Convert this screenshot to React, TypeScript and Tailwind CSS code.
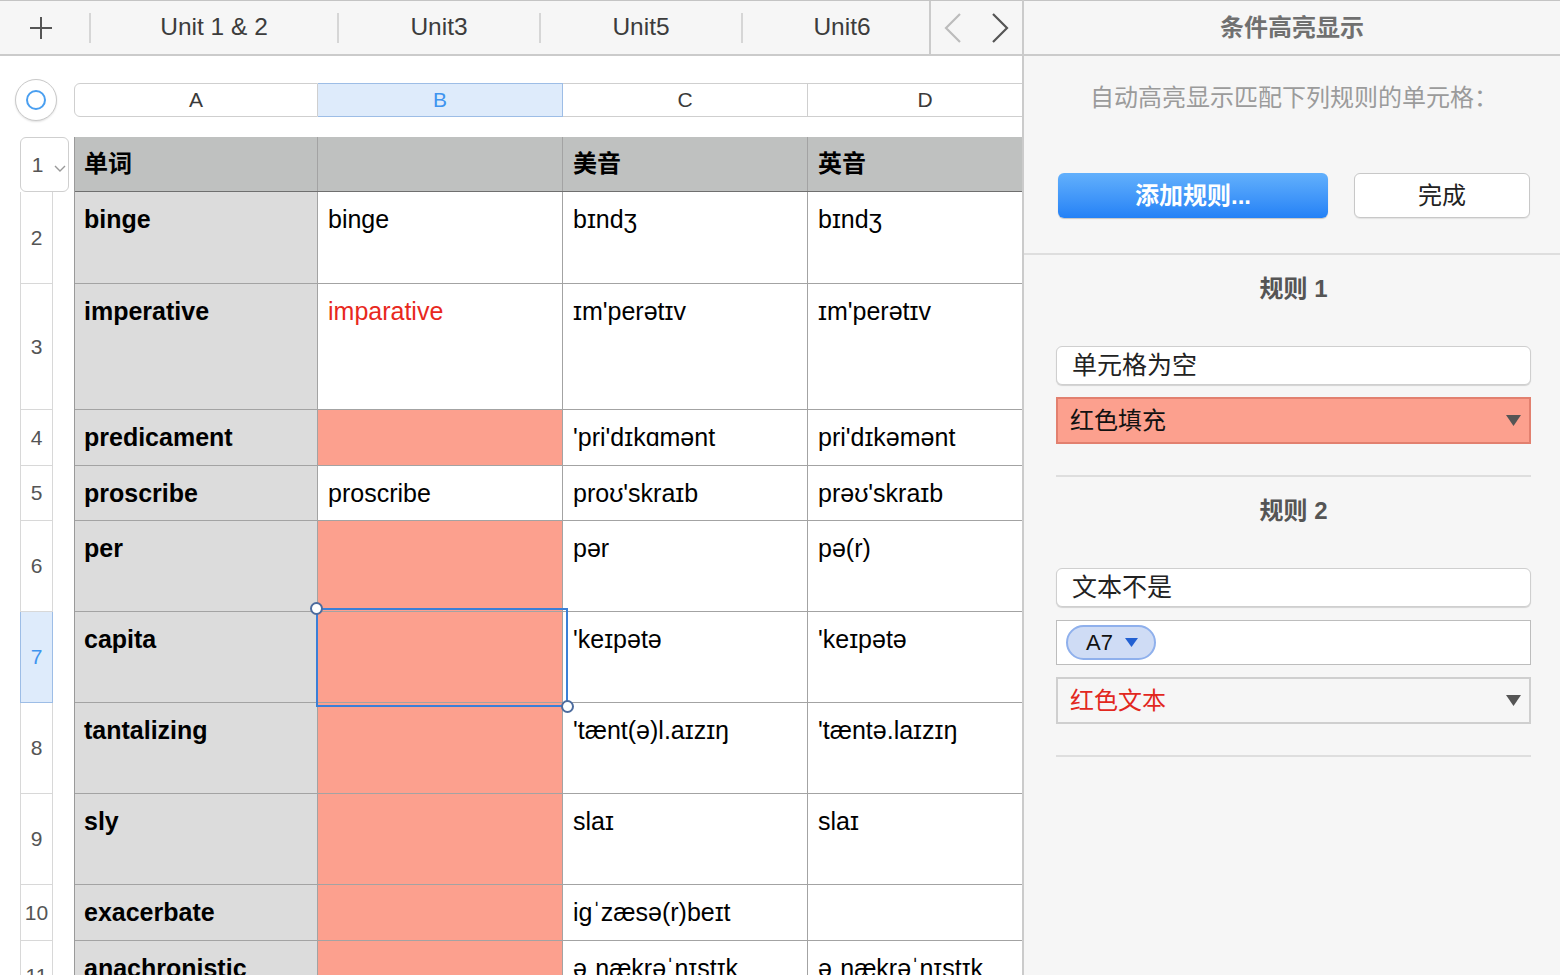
import React from 'react';

type Row = {
  h: string;
  a: string;
  b?: string;
  bRedText?: boolean;
  fill?: boolean;
  c: string;
  d: string;
  num: string;
  sel?: boolean;
};

const rows: Row[] = [
  { h: 'h-[92px]', num: '2', a: 'binge', b: 'binge', c: 'bɪndʒ', d: 'bɪndʒ' },
  { h: 'h-[126px]', num: '3', a: 'imperative', b: 'imparative', bRedText: true, c: "ɪm'perətɪv", d: "ɪm'perətɪv" },
  { h: 'h-[56px]', num: '4', a: 'predicament', fill: true, c: "'pri'dɪkɑmənt", d: "pri'dɪkəmənt" },
  { h: 'h-[55px]', num: '5', a: 'proscribe', b: 'proscribe', c: "proʊ'skraɪb", d: "prəʊ'skraɪb" },
  { h: 'h-[91px]', num: '6', a: 'per', fill: true, c: 'pər', d: 'pə(r)' },
  { h: 'h-[91px]', num: '7', a: 'capita', fill: true, c: "'keɪpətə", d: "'keɪpətə", sel: true },
  { h: 'h-[91px]', num: '8', a: 'tantalizing', fill: true, c: "'tænt(ə)l.aɪzɪŋ", d: "'tæntə.laɪzɪŋ" },
  { h: 'h-[91px]', num: '9', a: 'sly', fill: true, c: 'slaɪ', d: 'slaɪ' },
  { h: 'h-[56px]', num: '10', a: 'exacerbate', fill: true, c: 'igˈzæsə(r)beɪt', d: '' },
  { h: 'h-[70px]', num: '11', a: 'anachronistic', fill: true, c: 'əˌnækrəˈnɪstɪk', d: 'əˌnækrəˈnɪstɪk' },
];

const Triangle = ({ className }: { className: string }) => (
  <svg width="15" height="11" viewBox="0 0 15 11" className={className}>
    <path d="M0 0 L15 0 L7.5 11 Z" fill="currentColor" />
  </svg>
);

function TabBar() {
  const sep = <div className="w-[2px] h-[30px] bg-[#d6d6d6]" />;
  return (
    <div className="flex h-[56px] items-center border-t border-t-[#c4c4c4] border-b-2 border-b-[#cbcbcb] bg-[#f6f6f6] text-[24.5px] text-[#3c3c3c]">
      <div className="w-[89px] pl-[29px]">
        <svg width="24" height="24" viewBox="0 0 24 24" className="text-[#555]">
          <path d="M12 1 V23 M1 12 H23" stroke="currentColor" strokeWidth="2" />
        </svg>
      </div>
      {sep}
      <div className="w-[246px] text-center">Unit 1 &amp; 2</div>
      {sep}
      <div className="w-[200px] text-center">Unit3</div>
      {sep}
      <div className="w-[200px] text-center">Unit5</div>
      {sep}
      <div className="flex-1 pl-[12px] text-center">Unit6</div>
      <div className="self-stretch w-[2px] bg-[#cbcbcb]" />
      <div className="flex w-[91px] items-center justify-between px-[13px]">
        <svg width="18" height="30" viewBox="0 0 18 30" className="text-[#bcbcbc]">
          <path d="M16 1 L2 15 L16 29" stroke="currentColor" strokeWidth="2.2" fill="none" />
        </svg>
        <svg width="18" height="30" viewBox="0 0 18 30" className="text-[#555]">
          <path d="M2 1 L16 15 L2 29" stroke="currentColor" strokeWidth="2.2" fill="none" />
        </svg>
      </div>
    </div>
  );
}

function Sheet() {
  return (
    <div className="flex-1 bg-white overflow-hidden">
      {/* column letters */}
      <div className="mt-[23px] flex h-[42px] items-center">
        <div className="ml-[15px] flex h-[42px] w-[42px] shrink-0 items-center justify-center rounded-full border border-[#c9c9c9] bg-white shadow-[0_1px_2px_rgba(0,0,0,0.12)]">
          <div className="h-[20px] w-[20px] rounded-full border-2 border-[#4a9ff0]" />
        </div>
        <div className="ml-[17px] flex h-[34px] shrink-0 text-[21px] leading-[32px] text-[#3a3a3a]">
          <div className="w-[244px] shrink-0 rounded-l-[6px] border border-[#cfcfcf] text-center">A</div>
          <div className="w-[245px] shrink-0 border-y border-r border-[#9dbde6] bg-[#deebfb] text-center text-[#3f94ef]">B</div>
          <div className="w-[245px] shrink-0 border-y border-r border-[#cfcfcf] text-center">C</div>
          <div className="w-[234px] shrink-0 border-y border-[#cfcfcf] text-center">D</div>
        </div>
      </div>

      <div className="mt-[16px] flex">
        {/* row numbers */}
        <div className="w-[74px] shrink-0 pl-[20px] text-[21px] text-[#555]">
          <div className="flex h-[55px] w-[49px] items-center rounded-[6px] border border-[#cfcfcf] bg-white">
            <span className="w-[33px] text-center">1</span>
            <svg width="12" height="8" viewBox="0 0 12 8" className="mt-[8px] text-[#999]">
              <path d="M1 1 L6 6 L11 1" stroke="currentColor" strokeWidth="1.4" fill="none" />
            </svg>
          </div>
          {rows.map((r) => (
            <div
              key={r.num}
              className={`${r.h} flex w-[33px] items-center justify-center border-x border-b ${
                r.sel ? 'border-[#9dbde6] bg-[#deebfb] text-[#3f94ef]' : 'border-[#d8d8d8] bg-white'
              }`}
            >
              {r.num}
            </div>
          ))}
        </div>

        {/* table */}
        <div className="relative w-[948px] shrink-0 border-l border-[#9a9a9a] text-[25px] leading-[28px] text-black">
          <div className="flex h-[55px] border-b border-[#6f6f6f] bg-[#bfc1c0] font-bold text-[24px]">
            <div className="w-[243px] border-r border-[#a3a3a3] pl-[9px] pt-[13px]">单词</div>
            <div className="w-[245px] border-r border-[#a3a3a3]" />
            <div className="w-[245px] border-r border-[#a3a3a3] pl-[10px] pt-[13px]">美音</div>
            <div className="flex-1 pl-[10px] pt-[13px]">英音</div>
          </div>
          {rows.map((r) => (
            <div key={r.num} className={`${r.h} flex`}>
              <div className="w-[243px] border-r border-b border-[#a3a3a3] bg-[#dcdcdc] pl-[9px] pt-[13px] font-bold">{r.a}</div>
              <div
                className={`w-[245px] border-r border-b border-[#a3a3a3] pl-[10px] pt-[13px] ${
                  r.fill ? 'bg-[#fca08e]' : ''
                } ${r.bRedText ? 'text-[#e8281d]' : ''}`}
              >
                {r.b}
              </div>
              <div className="w-[245px] border-r border-b border-[#a3a3a3] pl-[10px] pt-[13px]">{r.c}</div>
              <div className="flex-1 border-b border-[#a3a3a3] pl-[10px] pt-[13px]">{r.d}</div>
            </div>
          ))}

          {/* selection over B7 */}
          <div className="absolute left-[241px] top-[471px] h-[99px] w-[252px] border-2 border-[#3b7fd6]">
            <div className="absolute -left-[8px] -top-[8px] h-[13px] w-[13px] rounded-full border-2 border-[#4d6c9e] bg-white" />
            <div className="absolute -bottom-[8px] -right-[8px] h-[13px] w-[13px] rounded-full border-2 border-[#4d6c9e] bg-white" />
          </div>
        </div>
      </div>
    </div>
  );
}

function RulePanel() {
  return (
    <div className="flex w-[538px] flex-col border-l-2 border-[#cbcbcb] bg-[#f6f6f6]">
      <div className="flex h-[56px] items-center justify-center border-t border-t-[#c4c4c4] border-b-2 border-b-[#cbcbcb] text-[24px] font-bold text-[#707070]">
        条件高亮显示
      </div>

      <div className="flex flex-col border-b-2 border-[#dedede] pl-[34px] pr-[30px] pb-[35px]">
        <div className="mt-[26px] text-center text-[24px] leading-[32px] text-[#9b9b9b]">自动高亮显示匹配下列规则的单元格：</div>
        <div className="mt-[59px] flex h-[45px] gap-[26px]">
          <div className="flex w-[270px] items-center justify-center rounded-[6px] bg-gradient-to-b from-[#62b0fc] to-[#2381f6] text-[24px] font-semibold text-white shadow-[0_1px_1px_rgba(0,0,0,0.2)]">
            添加规则...
          </div>
          <div className="flex w-[176px] items-center justify-center rounded-[6px] border border-[#c8c8c8] bg-white text-[24px] text-[#222] shadow-[0_1px_1px_rgba(0,0,0,0.08)]">
            完成
          </div>
        </div>
      </div>

      <div className="flex flex-col pl-[32px] pr-[29px]">
        <div className="mt-[18px] text-center text-[24px] font-bold leading-[32px] text-[#555]">规则 1</div>
        <div className="mt-[41px] flex h-[39px] items-center rounded-[6px] border border-[#cfcfcf] bg-white pl-[15px] text-[25px] text-[#222] shadow-[0_1px_1px_rgba(0,0,0,0.15)]">
          单元格为空
        </div>
        <div className="mt-[12px] flex h-[47px] items-center justify-between border-2 border-[#e2806f] bg-[#fca08e] pl-[12px] pr-[8px] text-[24px] text-[#111]">
          <span>红色填充</span>
          <Triangle className="text-[#555]" />
        </div>
        <div className="mt-[31px] h-[2px] bg-[#dedede]" />

        <div className="mt-[18px] text-center text-[24px] font-bold leading-[32px] text-[#555]">规则 2</div>
        <div className="mt-[41px] flex h-[39px] items-center rounded-[6px] border border-[#cfcfcf] bg-white pl-[15px] text-[25px] text-[#222] shadow-[0_1px_1px_rgba(0,0,0,0.15)]">
          文本不是
        </div>
        <div className="mt-[13px] flex h-[45px] items-center border border-[#bdbdbd] bg-white pl-[9px]">
          <div className="flex h-[35px] w-[90px] items-center gap-[12px] rounded-full border-2 border-[#8fb0ec] bg-[#cfdcf5] pl-[18px] text-[22px] text-[#111]">
            <span>A7</span>
            <svg width="13" height="9" viewBox="0 0 13 9" className="text-[#2260d2]">
              <path d="M0 0 L13 0 L6.5 9 Z" fill="currentColor" />
            </svg>
          </div>
        </div>
        <div className="mt-[12px] flex h-[47px] items-center justify-between border-2 border-[#cfcfcf] bg-[#f6f6f6] pl-[12px] pr-[8px] text-[24px] text-[#e2281e]">
          <span>红色文本</span>
          <Triangle className="text-[#555]" />
        </div>
        <div className="mt-[31px] h-[2px] bg-[#dedede]" />
      </div>
    </div>
  );
}

export default function App() {
  return (
    <div className="flex h-[975px] w-[1560px] overflow-hidden bg-white font-['Liberation_Sans','Noto_Sans_CJK_SC',sans-serif]">
      <div className="flex w-[1022px] shrink-0 flex-col overflow-hidden">
        <TabBar />
        <Sheet />
      </div>
      <RulePanel />
    </div>
  );
}
